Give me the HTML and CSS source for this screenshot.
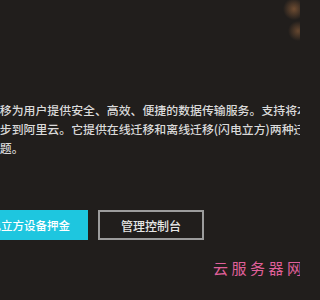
FILE: index.html
```html
<!DOCTYPE html>
<html lang="zh-CN">
<head>
<meta charset="utf-8">
<title>数据迁移</title>
<link rel="stylesheet" href="styles.css">
</head>
<body>
<main class="page">
  <p class="desc">
    <span class="line">据迁移为用户提供安全、高效、便捷的数据传输服务。支持将本地数据</span>
    <span class="line">据同步到阿里云。它提供在线迁移和离线迁移(闪电立方)两种迁移方式</span>
    <span class="line">移问题。</span>
  </p>
  <div class="actions">
    <a class="btn btn-primary">闪电立方设备押金</a>
    <a class="btn btn-outline">管理控制台</a>
  </div>
  <div class="watermark">云服务器网</div>
</main>
</body>
</html>
```
FILE: styles.css
```css
html, body {
  margin: 0;
  padding: 0;
  width: 300px;
  height: 300px;
  overflow: hidden;
}
body {
  background-color: #211e1c;
  background-image:
    radial-gradient(circle at 294px 9px, rgba(130, 88, 55, 0.8) 0, rgba(130, 88, 55, 0) 11px),
    radial-gradient(circle at 298px 31px, rgba(130, 88, 55, 0.7) 0, rgba(130, 88, 55, 0) 10px);
  background-repeat: no-repeat;
  font-family: "Noto Sans CJK SC", "Noto Sans", sans-serif;
}
.page {
  padding-top: 100px;
}
.desc {
  margin: 0 0 0 -24px;
  font-size: 11.9px;
  font-weight: 500;
  line-height: 19px;
  color: #dadada;
  white-space: nowrap;
}
.line {
  display: block;
}
.actions {
  display: flex;
  gap: 10px;
  margin-top: 53px;
  margin-left: -40px;
}
.btn {
  box-sizing: border-box;
  height: 30px;
  display: flex;
  align-items: center;
  justify-content: center;
  font-size: 11.5px;
  font-weight: 500;
  text-decoration: none;
}
.btn-primary {
  width: 128px;
  background: #1ec6df;
  color: #ffffff;
}
.btn-outline {
  width: 106px;
  border: 2px solid #9c9c9c;
  color: #e6e6e6;
  font-size: 12px;
}
.watermark {
  margin-top: 18px;
  padding-left: 213px;
  font-size: 15px;
  line-height: 20px;
  letter-spacing: 3.5px;
  color: #e0609a;
  white-space: nowrap;
}
```
